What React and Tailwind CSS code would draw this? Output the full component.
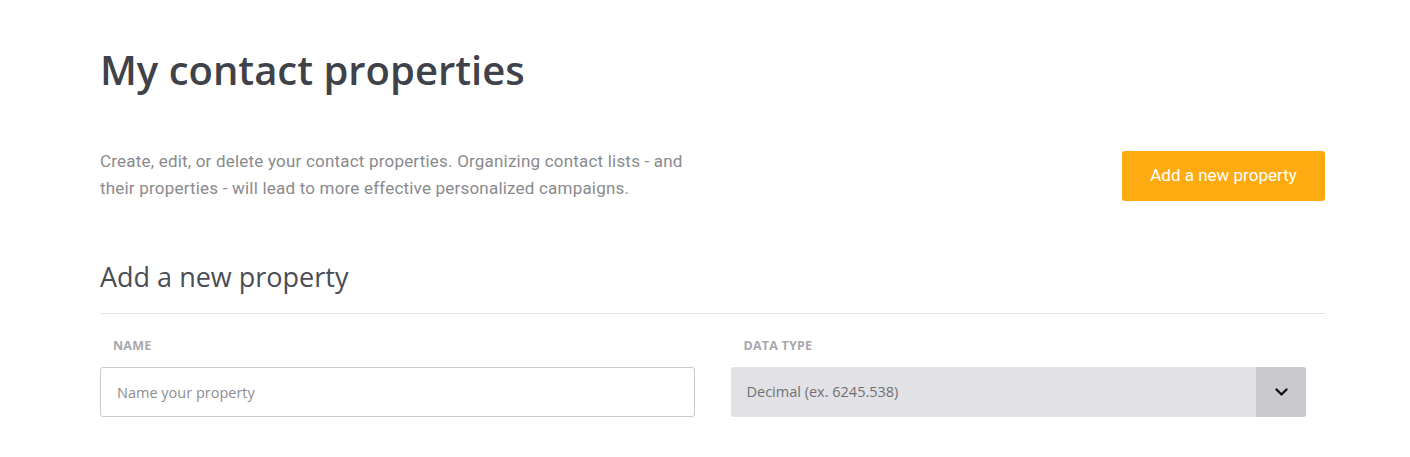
import React from 'react';

const App = () => {
  return (
    <div className="min-h-[457px] bg-white">
      <div className="w-[1225px] ml-[100px] pt-[42px]">
        <h1 className="text-[40px] leading-[56px] font-semibold text-[#3f4249] font-['Open_Sans',sans-serif]">
          My contact properties
        </h1>

        <div className="mt-[45px] flex items-start justify-between">
          <p className="w-[610px] text-[17px] leading-[27px] tracking-[0.2px] text-[#8a8a8c] font-['Roboto',sans-serif] mt-[5px]">
            Create, edit, or delete your contact properties. Organizing contact lists - and their properties - will lead to more effective personalized campaigns.
          </p>
          <button className="w-[203px] h-[50px] mt-[8px] rounded-[3px] bg-[#fdab10] text-white text-[17px] font-['Roboto',sans-serif]">
            Add a new property
          </button>
        </div>

        <h2 className="mt-[55px] text-[27px] leading-[40px] text-[#4a4d54] font-['Open_Sans',sans-serif]">
          Add a new property
        </h2>
        <div className="mt-[16px] h-px bg-[#e3e3e6]" />

        <div className="mt-[24px] grid grid-cols-2">
          <div className="pr-[18px]">
            <label className="block pl-[13px] text-[12.5px] leading-[15px] font-bold text-[#a8a8ae] font-['Open_Sans',sans-serif] tracking-[0.2px]">
              NAME
            </label>
            <input
              className="mt-[14px] w-full h-[50px] rounded-[3px] border border-[#cacacd] px-[16px] text-[14.5px] text-[#555] placeholder:text-[#8d8d90] font-['Open_Sans',sans-serif] outline-none"
              placeholder="Name your property"
            />
          </div>
          <div className="pl-[18px] pr-[19px]">
            <label className="block pl-[13px] text-[12.5px] leading-[15px] font-bold text-[#a8a8ae] font-['Open_Sans',sans-serif] tracking-[0.2px]">
              DATA TYPE
            </label>
            <div className="mt-[14px] flex h-[50px] rounded-[3px] bg-[#e1e1e6] overflow-hidden">
              <div className="flex-1 flex items-center px-[16px] text-[14.5px] text-[#707074] font-['Open_Sans',sans-serif]">
                Decimal (ex. 6245.538)
              </div>
              <div className="w-[50px] flex items-center justify-center bg-[#c9c9ce]">
                <svg width="13" height="9" viewBox="0 0 13 9" fill="none">
                  <path d="M1.5 1.5 L6.5 6.5 L11.5 1.5" stroke="#111" strokeWidth="2.4" strokeLinecap="round" strokeLinejoin="round" />
                </svg>
              </div>
            </div>
          </div>
        </div>
      </div>
    </div>
  );
};

export default App;
